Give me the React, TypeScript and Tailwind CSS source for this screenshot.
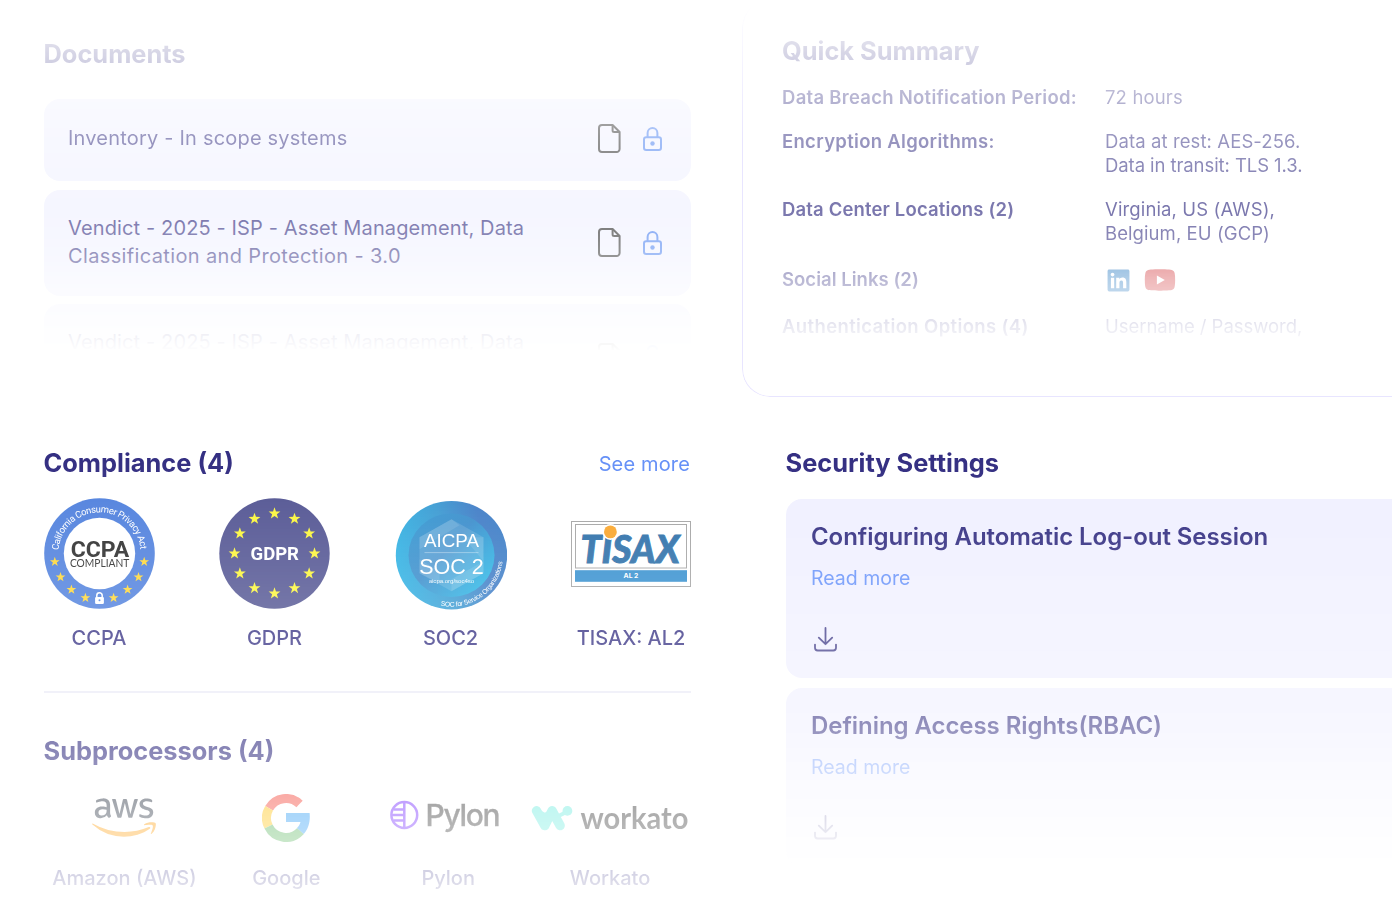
import type { ReactNode } from "react";
import { FaAws, FaLinkedin, FaYoutube } from "react-icons/fa6";
import { clsx } from "clsx";

const documents = [
  { lines: [{ text: "Inventory - In scope systems", tracking: "tracking-[0.2px]" }], height: "h-[82px]" },
  {
    lines: [
      { text: "Vendict - 2025 - ISP - Asset Management, Data", tracking: "tracking-[0.13px]" },
      { text: "Classification and Protection - 3.0", tracking: "tracking-[0.36px]" },
    ],
    height: "h-[106px]",
  },
  {
    lines: [{ text: "Vendict - 2025 - ISP - Asset Management, Data", tracking: "tracking-[0.13px]" }],
    height: "h-[106px]",
  },
];

function starPoints(cx: number, cy: number, r: number) {
  return Array.from({ length: 10 }, (_, i) => {
    const radius = i % 2 === 0 ? r : r * 0.4;
    const a = (Math.PI / 5) * i - Math.PI / 2;
    return `${(cx + radius * Math.cos(a)).toFixed(2)},${(cy + radius * Math.sin(a)).toFixed(2)}`;
  }).join(" ");
}

function Heading({ children }: { children: ReactNode }) {
  return <h2 className="text-[25.4px] leading-8 font-bold whitespace-nowrap text-[#342f82]">{children}</h2>;
}

function FileIcon() {
  return (
    <svg width="23" height="29" viewBox="0 0 23 29" fill="none" stroke="#2b2b2b" strokeWidth="2">
      <path d="M4 1h10.6l7 7v17a3 3 0 0 1-3 3H4a3 3 0 0 1-3-3V4a3 3 0 0 1 3-3Z" strokeLinejoin="round" />
      <path d="M14.6 1v5.6c0 .9.6 1.5 1.5 1.5h5.5" />
    </svg>
  );
}

function LockIcon() {
  return (
    <svg width="19" height="24" viewBox="0 0 19 24" fill="none" stroke="#4a80f0" strokeWidth="2">
      <rect x="1" y="10.3" width="17" height="12.6" rx="2.2" />
      <path d="M4.6 10.3V6a4.9 4.9 0 0 1 9.8 0v4.3" />
      <circle cx="9.5" cy="16.5" r="2.2" fill="#4a80f0" stroke="none" />
    </svg>
  );
}

function DownloadIcon() {
  return (
    <svg width="23" height="25" viewBox="0 0 23 25" fill="none" stroke="#3b3685" strokeWidth="1.8" strokeLinecap="round" strokeLinejoin="round">
      <path d="M11.5 1v16M4.8 10.6l6.7 6.6 6.7-6.6" />
      <path d="M1 17.6v3.2c0 1.7 1 2.7 2.7 2.7h15.6c1.7 0 2.7-1 2.7-2.7v-3.2" />
    </svg>
  );
}

function CcpaBadge() {
  const stars = [
    [44.7, 8.3],
    [39, 23.6],
    [28.1, 36.1],
    [14.1, 44.4],
  ];
  return (
    <svg width="111" height="111" viewBox="-55.5 -55.5 111 111">
      <circle r="55.3" fill="#4f80dd" />
      <circle r="35.7" fill="#fff" />
      <path id="ccpa-arc" d="M-41.2 0A41.2 41.2 0 0 1 41.2 0" fill="none" />
      <text fill="#fff" fontSize="9.4" fontFamily="Roboto, sans-serif">
        <textPath href="#ccpa-arc" startOffset="3.2" textLength="122" lengthAdjust="spacing">
          California Consumer Privacy Act
        </textPath>
      </text>
      <text x="-28.8" y="3.7" fill="#2b2b2b" fontSize="22" fontWeight="700" fontFamily="Roboto, sans-serif" textLength="58.5" lengthAdjust="spacingAndGlyphs">
        CCPA
      </text>
      <text x="-29.6" y="13.4" fill="#2b2b2b" fontSize="11.8" fontFamily="Lato, sans-serif" textLength="59.5" lengthAdjust="spacingAndGlyphs">
        COMPLIANT
      </text>
      {stars.map(([x, y]) => (
        <g key={x} fill="#ffd735">
          <polygon points={starPoints(x, y, 5.1)} />
          <polygon points={starPoints(-x, y, 5.1)} />
        </g>
      ))}
      <rect x="-4.4" y="43.6" width="8.8" height="6.8" rx="1.2" fill="#fff" />
      <path d="M-2.7 44v-2a2.7 2.7 0 0 1 5.4 0v2" fill="none" stroke="#fff" strokeWidth="1.5" />
      <circle cy="46.7" r="1" fill="#4f80dd" />
    </svg>
  );
}

function GdprBadge() {
  return (
    <svg width="111" height="111" viewBox="-55.5 -55.5 111 111">
      <circle r="55.2" fill="#525492" />
      {Array.from({ length: 12 }, (_, i) => {
        const a = (Math.PI / 6) * i;
        return <polygon key={i} points={starPoints(40 * Math.cos(a), 40 * Math.sin(a), 6.2)} fill="#fbf63a" />;
      })}
      <text x="-24" y="6.6" fill="#fff" fontSize="19.2" fontWeight="700" fontFamily="Roboto, sans-serif" textLength="48.5" lengthAdjust="spacingAndGlyphs">
        GDPR
      </text>
    </svg>
  );
}

function SocBadge() {
  return (
    <svg width="112" height="112" viewBox="-56.5 -57.2 112 112">
      <defs>
        <linearGradient id="soc-ring" x1="0" y1="0.6" x2="1" y2="0.4">
          <stop offset="0" stopColor="#2db2e4" />
          <stop offset="0.45" stopColor="#3a9ad2" />
          <stop offset="0.8" stopColor="#407cc6" />
          <stop offset="1" stopColor="#3b7dc6" />
        </linearGradient>
        <linearGradient id="soc-core" x1="0.1" y1="0.1" x2="0.9" y2="0.8">
          <stop offset="0" stopColor="#3495d0" />
          <stop offset="0.45" stopColor="#3a8ccb" />
          <stop offset="1" stopColor="#2cb4e4" />
        </linearGradient>
      </defs>
      <ellipse rx="55.7" ry="54.3" fill="url(#soc-ring)" />
      <ellipse rx="43" ry="41.8" fill="url(#soc-core)" />
      <path d="M0-36 32-18v36L0 36-32 18v-36Z" fill="#fff" opacity="0.13" />
      <path d="M0-36-32-18v12L8-30ZM32-18v24L12-18ZM32 6v12L0 36v-12ZM-32 4l20 12v12l-20-10Z" fill="#fff" opacity="0.1" />
      <path d="M-27-2.6h54" stroke="#fff" strokeWidth="0.6" opacity="0.6" />
      <g fill="#fff" fontFamily="'Liberation Sans', Arial, sans-serif">
        <text x="-27.5" y="-8.6" fontSize="19" textLength="55" lengthAdjust="spacingAndGlyphs">
          AICPA
        </text>
        <text x="-32.3" y="18.4" fontSize="22" textLength="64.5" lengthAdjust="spacingAndGlyphs">
          SOC 2
        </text>
        <text x="-22.8" y="27.8" fontSize="6.2" textLength="45.6" opacity="0.9">
          aicpa.org/soc4so
        </text>
        <path id="soc-arc" d="M-13.3 49.8A51.5 51.5 0 0 0 51.4 2" fill="none" />
        <text fontSize="6.8">
          <textPath href="#soc-arc" startOffset="2.5" textLength="85">
            SOC for Service Organizations
          </textPath>
        </text>
      </g>
    </svg>
  );
}

function TisaxBadge() {
  return (
    <svg width="120" height="66" viewBox="0 0 120 66">
      <rect x="0.5" y="0.5" width="119" height="65" fill="#fff" stroke="#a3a3a3" />
      <rect x="4.5" y="3.5" width="111" height="43.5" fill="none" stroke="#a3a3a3" />
      <text x="9.5" y="42" fill="#2b6ea8" stroke="#2b6ea8" strokeWidth="0.9" fontSize="37" fontWeight="900" fontStyle="italic" fontFamily="Lato, sans-serif" textLength="99" lengthAdjust="spacingAndGlyphs">
        TISAX
      </text>
      <circle cx="39.4" cy="10.9" r="8" fill="#fff" />
      <circle cx="39.4" cy="10.9" r="6.4" fill="#f9a429" />
      <rect x="4" y="49.2" width="112" height="11.6" fill="#3690cf" />
      <text x="60" y="57.4" fill="#fff" fontSize="6.8" fontWeight="700" fontFamily="Inter, sans-serif" textAnchor="middle">
        AL 2
      </text>
    </svg>
  );
}

function AwsLogo() {
  return (
    <>
      <svg width="0" height="0" className="absolute">
        <linearGradient id="aws-fill" x1="0" y1="0" x2="0" y2="1">
          <stop offset="0.57" stopColor="#252f3e" />
          <stop offset="0.57" stopColor="#ff9900" />
        </linearGradient>
      </svg>
      <FaAws className="h-[51px] w-16" fill="url(#aws-fill)" />
    </>
  );
}

function GoogleLogo() {
  // ring of radius 19.5, 9 wide, split in four arcs
  return (
    <svg width="48" height="48" viewBox="-24 -24 48 48" fill="none" strokeWidth="9">
      <path d="M13.55-14.02A19.5 19.5 0 0 0-16.89-9.75" stroke="#f44336" />
      <path d="M-16.89-9.75A19.5 19.5 0 0 0-17.5 8.6" stroke="#ffc107" />
      <path d="M-17.5 8.6A19.5 19.5 0 0 0 14.5 13" stroke="#4caf50" />
      <path d="M0-5h23.6c.8 7.6-.8 15.6-5.9 21l-6.7-6c1.6-1.4 2.7-3.2 3.5-6H0Z" fill="#2196f3" stroke="none" />
    </svg>
  );
}

function PylonLogo() {
  return (
    <svg width="117" height="40" viewBox="0 -2.5 117 40" className="overflow-visible">
      <g fill="none" stroke="#6f22ff" strokeWidth="2.5">
        <circle cx="14.3" cy="14.5" r="12.9" />
        <path d="M14.3 1.6v25.8M3.5 9h10.8M1.4 14.5h12.9M3.5 20h10.8" />
      </g>
      <text x="35.6" y="25.5" fill="#2b2b2b" stroke="#2b2b2b" strokeWidth="0.3" fontSize="30" fontWeight="500" fontFamily="Inter, sans-serif" textLength="75" lengthAdjust="spacing">
        Pylon
      </text>
    </svg>
  );
}

function WorkatoLogo() {
  return (
    <svg width="158" height="34" viewBox="-0.5 -2 158 34" className="overflow-visible">
      <g fill="none" stroke="#67eadd" strokeWidth="9.4" strokeLinecap="round" strokeLinejoin="round">
        <path d="M5 7.8 13.3 22.6 20.6 7.8 28.6 22.6" />
        <path d="M5 7.8 13 12.5 20.6 9" strokeWidth="5" />
        <path d="M28 12.5 35 9" strokeWidth="4" />
      </g>
      <circle cx="35.9" cy="7.9" r="4.9" fill="#67eadd" />
      <text x="49" y="26.2" fill="#2b2b2b" fontSize="30" fontWeight="700" fontFamily="Lato, sans-serif" textLength="108" lengthAdjust="spacingAndGlyphs">
        workato
      </text>
    </svg>
  );
}

const compliance = [
  { label: "CCPA", badge: <CcpaBadge />, width: "w-[111px]" },
  { label: "GDPR", badge: <GdprBadge />, width: "w-[111px]" },
  { label: "SOC2", badge: <SocBadge />, width: "w-[112px]" },
  { label: "TISAX: AL2", badge: <TisaxBadge />, width: "w-[120px]" },
];

const subprocessors = [
  { label: "Amazon (AWS)", logo: <AwsLogo /> },
  { label: "Google", logo: <GoogleLogo /> },
  { label: "Pylon", logo: <PylonLogo /> },
  { label: "Workato", logo: <WorkatoLogo /> },
];

const topFade =
  "[mask-image:linear-gradient(to_bottom,transparent_0px,rgba(0,0,0,0.2)_54px,rgba(0,0,0,0.35)_97px,rgba(0,0,0,0.5)_138px,rgba(0,0,0,0.66)_210px,rgba(0,0,0,0.58)_235px,rgba(0,0,0,0.5)_256px,rgba(0,0,0,0.34)_280px,rgba(0,0,0,0.09)_330px,transparent_352px)]";

function Documents() {
  return (
    <section className={clsx("h-[350px] overflow-hidden pt-[38px]", topFade)}>
      <Heading>Documents</Heading>
      <div className="mt-[29px] flex flex-col gap-[8.5px]">
        {documents.map((doc, i) => (
          <div
            key={i}
            className={clsx("flex shrink-0 items-start justify-between rounded-2xl bg-[#f0f1ff] pr-[29.5px] pl-[24.5px]", i === 0 ? "pt-[25px]" : "pt-6", doc.height)}
          >
            <div className="text-[20px] leading-7 whitespace-nowrap text-[#342f82]">
              {doc.lines.map((line) => (
                <p key={line.text} className={line.tracking}>
                  {line.text}
                </p>
              ))}
            </div>
            <div className={clsx("flex items-center gap-[22px]", i === 0 ? "h-[29px]" : "h-[58px]")}>
              <FileIcon />
              <LockIcon />
            </div>
          </div>
        ))}
      </div>
    </section>
  );
}

function SummaryRow({ label, tracking, children }: { label: string; tracking: string; children: ReactNode }) {
  return (
    <div className="flex items-start">
      <dt className={clsx("w-[323px] shrink-0 font-semibold whitespace-nowrap", tracking)}>{label}</dt>
      <dd className="whitespace-nowrap">{children}</dd>
    </div>
  );
}

function QuickSummary() {
  return (
    <section className="relative h-[397px] pl-10">
      <div className="pointer-events-none absolute inset-0 rounded-l-[28px] border-b border-l border-[#e8e5ff] [mask-image:linear-gradient(to_bottom,transparent_0px,black_140px)]" />
      <div className={clsx("h-[350px] pt-[35px]", topFade)}>
        <Heading>Quick Summary</Heading>
        <dl className="mt-[18px] flex flex-col gap-5 text-[18.5px] leading-6 text-[#342f82]">
          <SummaryRow label="Data Breach Notification Period:" tracking="tracking-[0.27px]">
            <p className="tracking-[0.15px]">72 hours</p>
          </SummaryRow>
          <SummaryRow label="Encryption Algorithms:" tracking="tracking-[0.3px]">
            <p className="tracking-[0.1px]">Data at rest: AES-256.</p>
            <p className="tracking-[-0.08px]">Data in transit: TLS 1.3.</p>
          </SummaryRow>
          <SummaryRow label="Data Center Locations (2)" tracking="tracking-[0.15px]">
            <p className="tracking-[0.13px]">Virginia, US (AWS),</p>
            <p className="tracking-[0.08px]">Belgium, EU (GCP)</p>
          </SummaryRow>
          <SummaryRow label="Social Links (2)" tracking="pt-0.5 tracking-[0.03px]">
            <div className="flex h-[29px] items-center gap-[12.5px] pt-px pl-px">
              <FaLinkedin className="size-[25px] text-[#1c72bd]" />
              <FaYoutube className="size-8 text-[#d13438]" />
            </div>
          </SummaryRow>
          <SummaryRow label="Authentication Options (4)" tracking="tracking-[0.37px]">
            <p className="tracking-[-0.03px]">Username / Password,</p>
          </SummaryRow>
        </dl>
      </div>
    </section>
  );
}

function SettingCard({ title }: { title: string }) {
  return (
    <article className="h-[179px] shrink-0 rounded-l-2xl bg-[#f0f0ff] pt-[22px] pl-[25.5px]">
      <h3 className="text-[24px] leading-8 font-semibold tracking-[-0.06px] whitespace-nowrap text-[#342f82]">{title}</h3>
      <a className="mt-[11px] block text-[19.5px] leading-7 text-[#6792fa]">Read more</a>
      <div className="mt-[34.5px] pl-[3px]">
        <DownloadIcon />
      </div>
    </article>
  );
}

export default function App() {
  return (
    <main className="flex h-[920px] w-[1392px] justify-between overflow-hidden bg-white font-['Inter',sans-serif]">
      <div className="ml-[43.5px] w-[647.5px]">
        <Documents />
        <div className="mt-[90px] h-[480px] [mask-image:linear-gradient(to_bottom,black_20px,rgba(0,0,0,0.94)_60px,rgba(0,0,0,0.8)_170px,rgba(0,0,0,0.74)_200px,rgba(0,0,0,0.58)_310px,rgba(0,0,0,0.38)_375px,rgba(0,0,0,0.2)_437px,transparent_480px)]">
          <section className="border-b-2 border-[#eaeaf6] pt-[7px] pb-[39px]">
            <div className="flex items-center justify-between">
              <Heading>Compliance (4)</Heading>
              <a className="pt-0.5 pr-px text-[20px] leading-7 tracking-[0.15px] text-[#6590f7]">See more</a>
            </div>
            <div className="mt-[18.5px] flex justify-between">
              {compliance.map((item) => (
                <div key={item.label} className={clsx("flex flex-col items-center", item.width)}>
                  <div className="flex h-[112px] items-center justify-center">{item.badge}</div>
                  <span className="mt-[14px] text-[20px] leading-7 font-medium whitespace-nowrap text-[#342f82]">
                    {item.label}
                  </span>
                </div>
              ))}
            </div>
          </section>
          <section className="pt-[42px]">
            <Heading>Subprocessors (4)</Heading>
            <div className="mt-[21px] grid grid-cols-4">
              {subprocessors.map((item) => (
                <div key={item.label} className="flex flex-col items-center">
                  <div className="flex h-[60px] items-center justify-center">{item.logo}</div>
                  <span className="mt-4 text-[20px] leading-7 font-medium whitespace-nowrap text-[#342f82]">
                    {item.label}
                  </span>
                </div>
              ))}
            </div>
          </section>
        </div>
      </div>
      <div className="w-[650px]">
        <QuickSummary />
        <section className="mt-[43px] h-[480px] overflow-hidden pt-[7px] pl-[43.5px] [mask-image:linear-gradient(to_bottom,black_20px,rgba(0,0,0,0.9)_97px,rgba(0,0,0,0.72)_200px,rgba(0,0,0,0.6)_260px,rgba(0,0,0,0.53)_287px,rgba(0,0,0,0.35)_326px,rgba(0,0,0,0.13)_388px,transparent_428px)]">
          <Heading>Security Settings</Heading>
          <div className="mt-5 flex flex-col gap-[9.5px]">
            <SettingCard title="Configuring Automatic Log-out Session" />
            <SettingCard title="Defining Access Rights(RBAC)" />
          </div>
        </section>
      </div>
    </main>
  );
}
